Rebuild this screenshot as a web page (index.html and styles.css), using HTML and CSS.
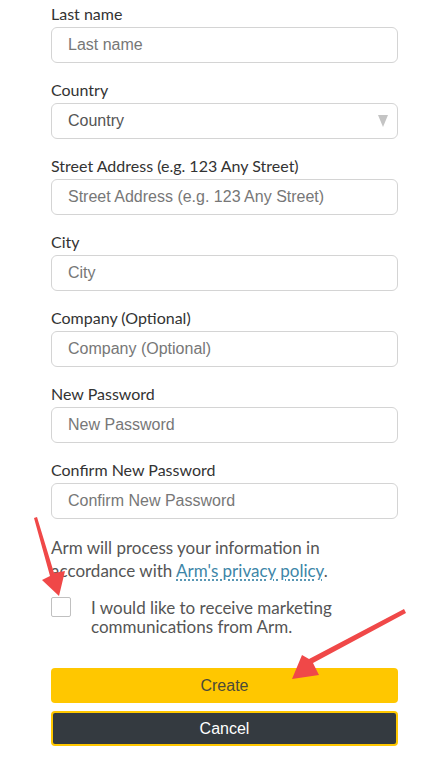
FILE: index.html
```html
<!DOCTYPE html>
<html>
<head>
<meta charset="utf-8">
<link rel="stylesheet" href="styles.css">
</head>
<body>
<form class="form">
  <div class="field">
    <label class="label">Last name</label>
    <input class="input" type="text" placeholder="Last name">
  </div>
  <div class="field">
    <label class="label">Country</label>
    <div class="select">
      <span class="select-text">Country</span>
      <svg class="select-arrow" width="10" height="12" viewBox="0 0 10 12"><path d="M0 0 L10 0 L5 12 Z" fill="#c4c4c4"/></svg>
    </div>
  </div>
  <div class="field">
    <label class="label">Street Address (e.g. 123 Any Street)</label>
    <input class="input" type="text" placeholder="Street Address (e.g. 123 Any Street)">
  </div>
  <div class="field">
    <label class="label">City</label>
    <input class="input" type="text" placeholder="City">
  </div>
  <div class="field">
    <label class="label">Company (Optional)</label>
    <input class="input" type="text" placeholder="Company (Optional)">
  </div>
  <div class="field">
    <label class="label">New Password</label>
    <input class="input" type="text" placeholder="New Password">
  </div>
  <div class="field">
    <label class="label">Confirm New Password</label>
    <input class="input" type="text" placeholder="Confirm New Password">
  </div>
  <p class="notice">Arm will process your information in accordance with <a class="link" href="#">Arm's privacy policy</a>.</p>
  <div class="check-row">
    <span class="checkbox"></span>
    <span class="check-text">I would like to receive marketing communications from Arm.</span>
  </div>
  <button class="btn btn-create" type="button">Create</button>
  <button class="btn btn-cancel" type="button">Cancel</button>
</form>
<svg class="annot" width="444" height="757" viewBox="0 0 444 757">
  <path d="M34 518 L37 517 L54 573 L65 571 L59 596 L42 580 L50 576 Z" fill="#f04848"/>
  <path d="M404 609 L406 613 L313 663 L319 675 L292 679 L302 655 L309 659 Z" fill="#f04848"/>
</svg>
</body>
</html>
```
FILE: styles.css
```css
html, body {
  margin: 0;
  padding: 0;
  background: #ffffff;
}
body {
  width: 444px;
  height: 757px;
  overflow: hidden;
  position: relative;
}
.form {
  width: 347px;
  margin: 0 0 0 51px;
  padding-top: 4px;
  display: flex;
  flex-direction: column;
}
.field {
  display: flex;
  flex-direction: column;
  margin-bottom: 17px;
}
.label {
  font-family: Lato, sans-serif;
  font-size: 16px;
  line-height: 20px;
  color: #333333;
  margin-bottom: 3px;
}
.input, .select {
  box-sizing: border-box;
  height: 36px;
  width: 347px;
  border: 1px solid #d4d4d4;
  border-radius: 6px;
  padding: 0 16px;
  font-family: "Liberation Sans", Arial, sans-serif;
  font-size: 16px;
  color: #333;
  background: #fff;
  outline: none;
}
.input::placeholder {
  color: #777777;
  opacity: 1;
}
.select {
  display: flex;
  align-items: center;
  justify-content: space-between;
  padding-right: 9px;
}
.select-text {
  color: #555555;
}
.notice {
  margin: 0;
  font-family: Lato, sans-serif;
  font-size: 17px;
  line-height: 23px;
  color: #555555;
  padding-right: 30px;
}
.link {
  color: #3d86a8;
  text-decoration: underline dotted #3d86a8;
  text-underline-offset: 3px;
}
.check-row {
  display: flex;
  align-items: flex-start;
  margin-top: 15px;
}
.checkbox {
  flex: none;
  box-sizing: border-box;
  width: 20px;
  height: 20px;
  border: 1px solid #c0c0c0;
  border-radius: 2px;
}
.check-text {
  margin-left: 20px;
  font-family: Lato, sans-serif;
  font-size: 17px;
  line-height: 19px;
  color: #555555;
  padding-top: 1px;
}
.btn {
  box-sizing: border-box;
  width: 347px;
  height: 35px;
  border-radius: 4px;
  font-family: "Liberation Sans", Arial, sans-serif;
  font-size: 16px;
  padding: 0;
}
.btn-create {
  margin-top: 32px;
  background: #ffc700;
  border: none;
  color: #4a4a3a;
}
.btn-cancel {
  margin-top: 8px;
  background: #343a40;
  border: 2px solid #ffc700;
  color: #ffffff;
}
.annot {
  position: absolute;
  left: 0;
  top: 0;
  pointer-events: none;
}
```
